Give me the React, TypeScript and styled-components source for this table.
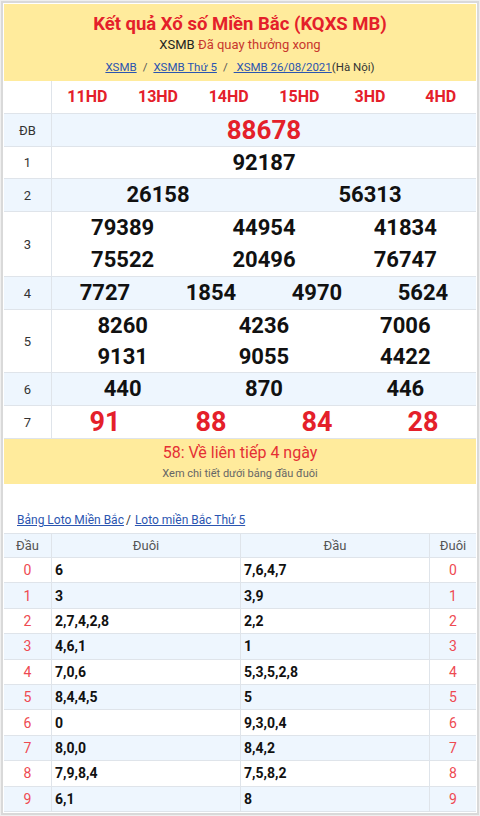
import React from 'react';
import styled, { createGlobalStyle } from 'styled-components';

const Global = createGlobalStyle`
  html, body { margin: 0; padding: 0; background: #fff; }
  body { font-family: Roboto, "Noto Sans", "Liberation Sans", Arial, sans-serif; color: #222; }
  * { box-sizing: border-box; }
`;

const LINE = '#dfe4ea';
const BLUE_ROW = '#eef6fe';
const RED = '#e4202a';

const Frame = styled.div`
  margin: 1px;
  border: 2px solid #d9d9d9;
  padding: 1px;
  box-shadow: 0 0 0 1px #efefef;
  background: #fff;
`;

const Head = styled.header`
  background: #ffeb9c;
  height: 77px;
  padding-top: 8px;
  display: flex;
  flex-direction: column;
  align-items: center;
`;

const Title = styled.h1`
  margin: 0;
  font-size: 18.5px;
  line-height: 24px;
  font-weight: 700;
  color: ${RED};
`;

const Status = styled.div`
  margin-top: 0;
  font-size: 13px;
  line-height: 18px;
  color: #222;
`;

const StatusRed = styled.span`
  color: #c8372d;
`;

const Crumbs = styled.nav`
  margin-top: 4px;
  font-size: 11.5px;
  line-height: 18px;
  color: #333;
  display: flex;
`;

const Link = styled.a`
  color: #2b55b0;
  text-decoration: underline;
`;

const Sep = styled.span`
  color: #555;
  padding: 0 6px;
`;

const Row = styled.div<{ $alt?: boolean }>`
  display: grid;
  grid-template-columns: 48px 1fr;
  background: ${(p) => (p.$alt ? BLUE_ROW : '#fff')};
  border-bottom: 1px solid ${LINE};
`;

const Label = styled.div`
  border-right: 1px solid ${LINE};
  display: flex;
  align-items: center;
  justify-content: center;
  font-size: 13px;
  color: #333;
`;

const Cells = styled.div<{ $cols: number }>`
  display: grid;
  grid-template-columns: repeat(${(p) => p.$cols}, 1fr);
`;

const Num = styled.div<{ $size: number; $red?: boolean; $lh: number }>`
  text-align: center;
  font-weight: 700;
  font-size: ${(p) => p.$size}px;
  line-height: ${(p) => p.$lh}px;
  color: ${(p) => (p.$red ? RED : '#111')};
`;

const Notice = styled.div`
  background: #ffeb9c;
  height: 45px;
  padding-top: 4px;
  display: flex;
  flex-direction: column;
  align-items: center;
`;

const NoticeMain = styled.div`
  font-size: 16px;
  line-height: 19px;
  color: #e53034;
`;

const NoticeSub = styled.div`
  font-size: 11px;
  line-height: 16px;
  margin-top: 4px;
  color: #666;
`;

const LotoLinks = styled.div`
  padding: 27px 13px 4px;
  font-size: 12px;
  line-height: 18px;
  color: #333;
`;

const LotoSep = styled.span`
  padding: 0 4px 0 2px;
`;

const LotoTable = styled.div`
  border-top: 1px solid ${LINE};
`;

const LotoRow = styled.div<{ $alt?: boolean; $head?: boolean }>`
  display: grid;
  grid-template-columns: 48px 189px 189px 1fr;
  height: ${(p) => (p.$head ? 24 : 25.4)}px;
  background: ${(p) => (p.$alt ? BLUE_ROW : '#fff')};
  border-bottom: 1px solid ${LINE};
`;

const LCell = styled.div<{ $kind: 'head' | 'digit' | 'val'; $last?: boolean }>`
  display: flex;
  align-items: center;
  justify-content: ${(p) => (p.$kind === 'val' ? 'flex-start' : 'center')};
  padding-left: ${(p) => (p.$kind === 'val' ? '3px' : '0')};
  border-right: ${(p) => (p.$last ? 'none' : `1px solid ${LINE}`)};
  font-size: ${(p) => (p.$kind === 'head' ? 13 : 14)}px;
  font-weight: ${(p) => (p.$kind === 'val' ? 700 : 400)};
  color: ${(p) => (p.$kind === 'head' ? '#555' : p.$kind === 'digit' ? '#ee4a52' : '#111')};
`;

type Prize = { label: string; cols: number; nums: string[]; size: number; lh: number; red?: boolean; alt?: boolean };

const prizes: Prize[] = [
  { label: '', cols: 6, nums: ['11HD', '13HD', '14HD', '15HD', '3HD', '4HD'], size: 16, lh: 32, red: true },
  { label: 'ĐB', cols: 1, nums: ['88678'], size: 26, lh: 32, red: true, alt: true },
  { label: '1', cols: 1, nums: ['92187'], size: 22, lh: 31 },
  { label: '2', cols: 2, nums: ['26158', '56313'], size: 22, lh: 32, alt: true },
  { label: '3', cols: 3, nums: ['79389', '44954', '41834', '75522', '20496', '76747'], size: 22, lh: 32 },
  { label: '4', cols: 4, nums: ['7727', '1854', '4970', '5624'], size: 22, lh: 32, alt: true },
  { label: '5', cols: 3, nums: ['8260', '4236', '7006', '9131', '9055', '4422'], size: 22, lh: 31 },
  { label: '6', cols: 3, nums: ['440', '870', '446'], size: 22, lh: 32, alt: true },
  { label: '7', cols: 4, nums: ['91', '88', '84', '28'], size: 27, lh: 32, red: true },
];

const loto: [string, string][] = [
  ['6', '7,6,4,7'],
  ['3', '3,9'],
  ['2,7,4,2,8', '2,2'],
  ['4,6,1', '1'],
  ['7,0,6', '5,3,5,2,8'],
  ['8,4,4,5', '5'],
  ['0', '9,3,0,4'],
  ['8,0,0', '8,4,2'],
  ['7,9,8,4', '7,5,8,2'],
  ['6,1', '8'],
];

export default function App() {
  return (
    <>
      <Global />
      <Frame>
        <Head>
          <Title>Kết quả Xổ số Miền Bắc (KQXS MB)</Title>
          <Status>
            XSMB <StatusRed>Đã quay thưởng xong</StatusRed>
          </Status>
          <Crumbs>
            <Link>XSMB</Link>
            <Sep>/</Sep>
            <Link>XSMB Thứ 5</Link>
            <Sep>/</Sep>
            <Link>&nbsp;XSMB 26/08/2021</Link>
            <span>(Hà Nội)</span>
          </Crumbs>
        </Head>
        {prizes.map((p, i) => (
          <Row key={i} $alt={p.alt}>
            <Label>{p.label}</Label>
            <Cells $cols={p.cols}>
              {p.nums.map((n, j) => (
                <Num key={j} $size={p.size} $lh={p.lh} $red={p.red}>
                  {n}
                </Num>
              ))}
            </Cells>
          </Row>
        ))}
        <Notice>
          <NoticeMain>58: Về liên tiếp 4 ngày</NoticeMain>
          <NoticeSub>Xem chi tiết dưới bảng đầu đuôi</NoticeSub>
        </Notice>
        <LotoLinks>
          <Link>Bảng Loto Miền Bắc</Link>
          <LotoSep>/</LotoSep>
          <Link>Loto miền Bắc Thứ 5</Link>
        </LotoLinks>
        <LotoTable>
          <LotoRow $head $alt>
            <LCell $kind="head">Đầu</LCell>
            <LCell $kind="head">Đuôi</LCell>
            <LCell $kind="head">Đầu</LCell>
            <LCell $kind="head" $last>Đuôi</LCell>
          </LotoRow>
          {loto.map(([a, b], i) => (
            <LotoRow key={i} $alt={i % 2 === 1}>
              <LCell $kind="digit">{i}</LCell>
              <LCell $kind="val">{a}</LCell>
              <LCell $kind="val">{b}</LCell>
              <LCell $kind="digit" $last>{i}</LCell>
            </LotoRow>
          ))}
        </LotoTable>
      </Frame>
    </>
  );
}
